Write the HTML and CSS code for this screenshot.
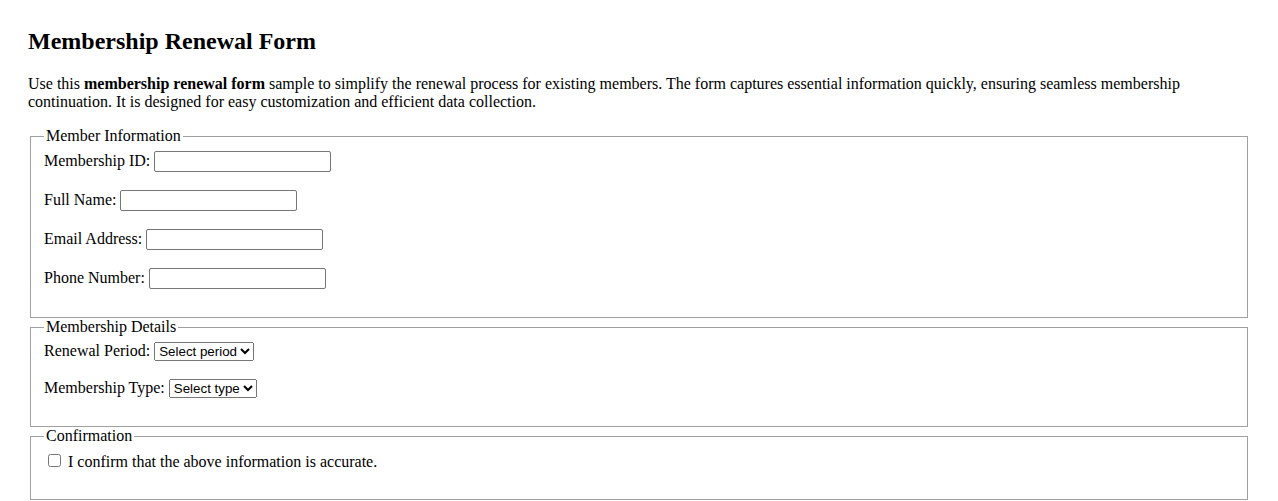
FILE: index.html
```html
<!DOCTYPE html>
<html lang="en">
<head>
    <meta charset="UTF-8">
    <meta name="viewport" content="width=device-width, initial-scale=1.0">
    <title>Membership Renewal Form</title>
    <link rel="stylesheet" href="styles.css">
</head>
<body>
    <div class="container">
        <h2>Membership Renewal Form</h2>
        <p class="intro">Use this <strong>membership renewal form</strong> sample to simplify the renewal process for existing members. The form captures essential information quickly, ensuring seamless membership continuation. It is designed for easy customization and efficient data collection.</p>

        <form>
            <fieldset>
                <legend>Member Information</legend>
                <div class="field">
                    <label for="memberId">Membership ID:</label>
                    <input type="text" id="memberId" name="memberId">
                </div>
                <div class="field">
                    <label for="fullName">Full Name:</label>
                    <input type="text" id="fullName" name="fullName">
                </div>
                <div class="field">
                    <label for="email">Email Address:</label>
                    <input type="email" id="email" name="email">
                </div>
                <div class="field">
                    <label for="phone">Phone Number:</label>
                    <input type="tel" id="phone" name="phone">
                </div>
            </fieldset>

            <fieldset>
                <legend>Membership Details</legend>
                <div class="field">
                    <label for="period">Renewal Period:</label>
                    <select id="period" name="period">
                        <option>Select period</option>
                        <option>1 Year</option>
                        <option>2 Years</option>
                    </select>
                </div>
                <div class="field">
                    <label for="type">Membership Type:</label>
                    <select id="type" name="type">
                        <option>Select type</option>
                        <option>Standard</option>
                        <option>Premium</option>
                    </select>
                </div>
            </fieldset>

            <fieldset>
                <legend>Confirmation</legend>
                <div class="field">
                    <input type="checkbox" id="confirm" name="confirm">
                    <label for="confirm">I confirm that the above information is accurate.</label>
                </div>
            </fieldset>
        </form>
    </div>
</body>
</html>
```

FILE: styles.css
```css
body {
    font-family: "Liberation Serif", "Times New Roman", serif;
    font-size: 16px;
    color: #000;
    background-color: #fff;
    margin: 0;
    padding: 28px;
}

h2 {
    font-size: 24px;
    margin: 0 0 20px 0;
}

.intro {
    margin: 0 0 16px 0;
}

fieldset {
    border: 1px solid #a0a0a0;
    margin: 0 2px 0 2px;
    padding: 6px 12px 10px 13px;
}

legend {
    padding: 0 2px;
}

.field {
    margin-bottom: 18px;
}

input[type="text"],
input[type="email"],
input[type="tel"] {
    box-sizing: border-box;
    width: 177px;
    height: 21px;
    font-family: "Liberation Sans", Arial, sans-serif;
    font-size: 13.33px;
    border: 1px solid #767676;
    border-radius: 2px;
}

select {
    font-family: "Liberation Sans", Arial, sans-serif;
    font-size: 13.33px;
    height: 19px;
}

input[type="checkbox"] {
    margin: 3px 3px 3px 4px;
}
```
